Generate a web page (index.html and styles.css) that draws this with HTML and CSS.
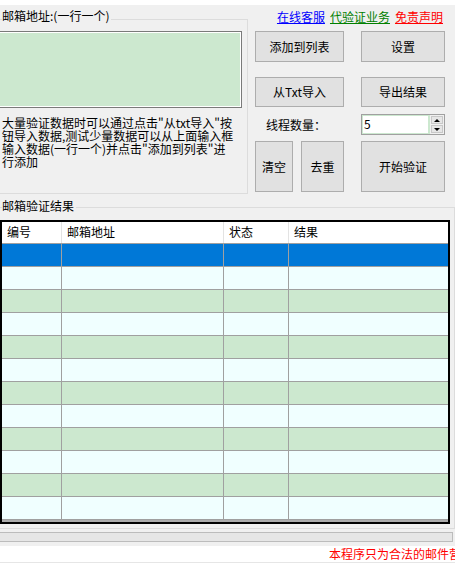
FILE: index.html
```html
<!DOCTYPE html>
<html lang="zh-CN">
<head>
<meta charset="utf-8">
<title>邮箱验证</title>
<link rel="stylesheet" href="styles.css">
</head>
<body>
<div class="window">
  <div class="form">
    <div class="top">
      <div class="group group-input">
        <span class="legend">邮箱地址:(一行一个)</span>
        <div class="textbox"></div>
        <p class="hint">大量验证数据时可以通过点击"从txt导入"按<br>钮导入数据,测试少量数据可以从上面输入框<br>输入数据(一行一个)并点击"添加到列表"进<br>行添加</p>
      </div>
      <div class="panel">
        <div class="links">
          <span class="link link-blue">在线客服</span>
          <span class="link link-green">代验证业务</span>
          <span class="link link-red">免责声明</span>
        </div>
        <div class="btn-row r1">
          <button class="btn w89">添加到列表</button>
          <button class="btn w84">设置</button>
        </div>
        <div class="btn-row r2">
          <button class="btn w89">从Txt导入</button>
          <button class="btn w84">导出结果</button>
        </div>
        <div class="threads">
          <span class="threads-label">线程数量：</span>
          <div class="spin">
            <div class="spin-text">5</div>
            <div class="spin-btns">
              <span class="spin-btn"><i class="tri-up"></i></span>
              <span class="spin-btn"><i class="tri-down"></i></span>
            </div>
          </div>
        </div>
        <div class="btn-row r4">
          <button class="btn w38">清空</button>
          <button class="btn w43">去重</button>
          <button class="btn w84">开始验证</button>
        </div>
      </div>
    </div>

    <div class="group group-result">
      <span class="legend legend-result">邮箱验证结果</span>
      <div class="grid">
        <div class="grid-row head">
          <span class="cell">编号</span><span class="cell">邮箱地址</span><span class="cell">状态</span><span class="cell">结果</span>
        </div>
        <div class="grid-row sel"><span class="cell"></span><span class="cell"></span><span class="cell"></span><span class="cell"></span></div>
        <div class="grid-row azure"><span class="cell"></span><span class="cell"></span><span class="cell"></span><span class="cell"></span></div>
        <div class="grid-row mint"><span class="cell"></span><span class="cell"></span><span class="cell"></span><span class="cell"></span></div>
        <div class="grid-row azure"><span class="cell"></span><span class="cell"></span><span class="cell"></span><span class="cell"></span></div>
        <div class="grid-row mint"><span class="cell"></span><span class="cell"></span><span class="cell"></span><span class="cell"></span></div>
        <div class="grid-row azure"><span class="cell"></span><span class="cell"></span><span class="cell"></span><span class="cell"></span></div>
        <div class="grid-row mint"><span class="cell"></span><span class="cell"></span><span class="cell"></span><span class="cell"></span></div>
        <div class="grid-row azure"><span class="cell"></span><span class="cell"></span><span class="cell"></span><span class="cell"></span></div>
        <div class="grid-row mint"><span class="cell"></span><span class="cell"></span><span class="cell"></span><span class="cell"></span></div>
        <div class="grid-row azure"><span class="cell"></span><span class="cell"></span><span class="cell"></span><span class="cell"></span></div>
        <div class="grid-row mint"><span class="cell"></span><span class="cell"></span><span class="cell"></span><span class="cell"></span></div>
        <div class="grid-row azure"><span class="cell"></span><span class="cell"></span><span class="cell"></span><span class="cell"></span></div>
      </div>
    </div>

    <div class="progress"></div>
  </div>
  <div class="status">本程序只为合法的邮件营</div>
</div>
</body>
</html>
```

FILE: styles.css
```css
html, body {
  margin: 0;
  padding: 0;
}
body {
  background: #ffffff;
  font-family: "Noto Sans CJK SC", "Noto Sans", sans-serif;
  font-size: 12px;
  color: #000000;
  overflow: hidden;
}
.window {
  width: 461px;
  height: 565px;
  padding-top: 5px;
  box-sizing: border-box;
}
.form {
  width: 455px;
  height: 541px;
  background: #f0f0f0;
  overflow: hidden;
}
.top {
  display: flex;
  align-items: flex-start;
}
.group {
  position: relative;
  border: 1px solid #dcdcdc;
  box-sizing: border-box;
  flex: none;
}
.group-input {
  margin-left: -2px;
  margin-top: 14px;
  width: 250px;
  height: 175px;
}
.legend {
  position: absolute;
  left: 3px;
  top: -11px;
  line-height: 14px;
  background: #f0f0f0;
  padding-right: 2px;
  white-space: nowrap;
}
.legend-result {
  top: -9px;
}
.textbox {
  margin-top: 11px;
  margin-left: -3px;
  width: 246px;
  height: 77px;
  box-sizing: border-box;
  border: 1px solid #7a7a7a;
  box-shadow: inset 0 0 0 1px #ffffff;
  background: #cce8cf;
}
.hint {
  margin: 8px 0 0 3px;
  line-height: 13px;
  white-space: nowrap;
}
.panel {
  margin-left: 7px;
  width: 190px;
  flex: none;
  display: flex;
  flex-direction: column;
}
.links {
  margin-top: 5px;
  display: flex;
  justify-content: flex-end;
  gap: 5px;
  padding-right: 2px;
  line-height: 14px;
  height: 14px;
}
.link {
  text-decoration: underline;
  text-underline-offset: 1px;
}
.link-blue { color: #0000ff; }
.link-green { color: #008000; }
.link-red { color: #ff0000; }
.btn-row {
  display: flex;
}
.r1 { margin-top: 7px; height: 31px; }
.r2 { margin-top: 15px; height: 30px; }
.r4 { margin-top: 6px; height: 51px; }
.btn {
  font: inherit;
  font-size: 12px;
  line-height: 14px;
  padding: 0;
  margin: 0;
  color: #000000;
  background: #e1e1e1;
  border: 1px solid #adadad;
  box-sizing: border-box;
  height: 100%;
  flex: none;
}
.w89 { width: 89px; }
.w84 { width: 84px; margin-left: 17px; }
.w38 { width: 38px; }
.w43 { width: 43px; margin-left: 8px; }
.threads {
  margin-top: 7px;
  height: 21px;
  display: flex;
  align-items: center;
}
.threads-label {
  width: 106px;
  padding-left: 11px;
  box-sizing: border-box;
  line-height: 14px;
  flex: none;
}
.spin {
  display: flex;
  width: 84px;
  height: 21px;
  box-sizing: border-box;
  border: 1px solid #a0a0a0;
  background: #ffffff;
  flex: none;
}
.spin-text {
  flex: 1;
  border: 1px solid #cce8cf;
  line-height: 16px;
  padding-left: 1px;
}
.spin-btns {
  width: 15px;
  display: flex;
  flex-direction: column;
  background: #f0f0f0;
  border-left: 1px solid #cce8cf;
  padding: 1px;
  box-sizing: border-box;
  gap: 1px;
}
.spin-btn {
  flex: 1;
  display: flex;
  align-items: center;
  justify-content: center;
  background: #e6e6e6;
  border: 1px solid #c8c8c8;
}
.tri-up {
  width: 0;
  height: 0;
  border-left: 3px solid transparent;
  border-right: 3px solid transparent;
  border-bottom: 3px solid #000000;
}
.tri-down {
  width: 0;
  height: 0;
  border-left: 3px solid transparent;
  border-right: 3px solid transparent;
  border-top: 3px solid #000000;
}
.group-result {
  margin-left: -2px;
  margin-top: 13px;
  width: 457px;
  height: 322px;
}
.grid {
  margin-top: 12px;
  margin-left: 1px;
  width: 450px;
  height: 304px;
  border: 2px solid #000000;
  box-sizing: border-box;
  background: #ababab;
  overflow: hidden;
}
.grid-row {
  display: grid;
  grid-template-columns: 60px 162px 65px 159px;
  height: 23px;
  border-bottom: 1px solid #a0a0a0;
  box-sizing: border-box;
}
.cell {
  border-right: 1px solid #a0a0a0;
}
.cell:last-child {
  border-right: none;
}
.head {
  height: 22px;
  background: #ffffff;
}
.head .cell {
  border-right-color: #e3e3e3;
  padding-left: 5px;
  line-height: 19px;
}
.sel { background: #0078d7; }
.azure { background: #f0ffff; }
.mint { background: #cce8cf; }
.progress {
  margin-top: 3px;
  margin-left: -1px;
  width: 454px;
  height: 10px;
  box-sizing: border-box;
  border: 1px solid #bcbcbc;
  background: #e6e6e6;
}
.status {
  width: 455px;
  height: 17px;
  border-bottom: 1px solid #e6e6e6;
  overflow: hidden;
  white-space: nowrap;
  padding-left: 329px;
  box-sizing: border-box;
  color: #ff0000;
  line-height: 15px;
}
```
